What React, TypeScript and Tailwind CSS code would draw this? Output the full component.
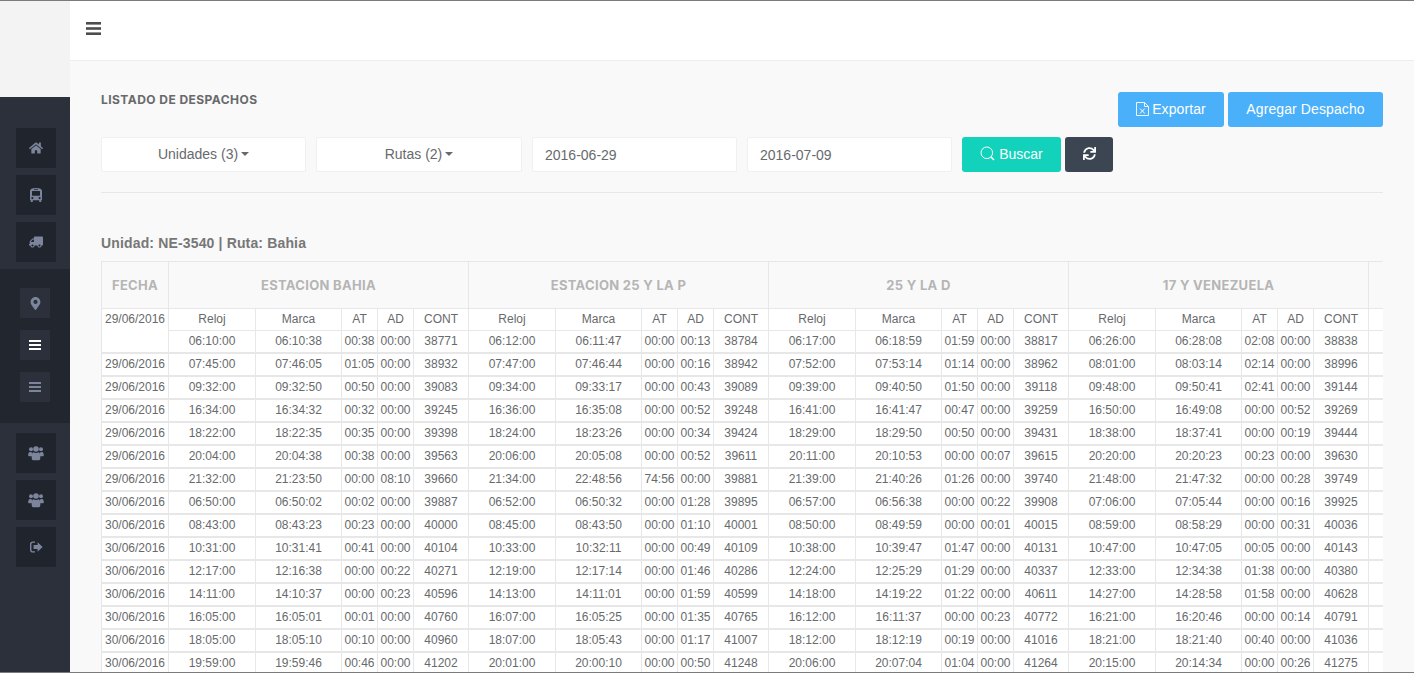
import { FaHome, FaTruck, FaMapMarkerAlt, FaSync } from "react-icons/fa";
import type { ReactNode } from "react";

type Cell = [string, string, string, string, string];
type Row = { fecha: string; cells: Cell[] };

const stations = ["ESTACION BAHIA", "ESTACION 25 Y LA P", "25 Y LA D", "17 Y VENEZUELA"];

function parseRow(line: string): Row {
  const parts = line.split(" ");
  const fecha = parts[0] === "-" ? "" : parts[0];
  const rest = parts.slice(1);
  const cells: Cell[] = [];
  for (let i = 0; i < rest.length; i += 5) {
    cells.push([rest[i], rest[i + 1], rest[i + 2], rest[i + 3], rest[i + 4]]);
  }
  return { fecha, cells };
}

const rows = [
  "- 06:10:00 06:10:38 00:38 00:00 38771 06:12:00 06:11:47 00:00 00:13 38784 06:17:00 06:18:59 01:59 00:00 38817 06:26:00 06:28:08 02:08 00:00 38838",
  "29/06/2016 07:45:00 07:46:05 01:05 00:00 38932 07:47:00 07:46:44 00:00 00:16 38942 07:52:00 07:53:14 01:14 00:00 38962 08:01:00 08:03:14 02:14 00:00 38996",
  "29/06/2016 09:32:00 09:32:50 00:50 00:00 39083 09:34:00 09:33:17 00:00 00:43 39089 09:39:00 09:40:50 01:50 00:00 39118 09:48:00 09:50:41 02:41 00:00 39144",
  "29/06/2016 16:34:00 16:34:32 00:32 00:00 39245 16:36:00 16:35:08 00:00 00:52 39248 16:41:00 16:41:47 00:47 00:00 39259 16:50:00 16:49:08 00:00 00:52 39269",
  "29/06/2016 18:22:00 18:22:35 00:35 00:00 39398 18:24:00 18:23:26 00:00 00:34 39424 18:29:00 18:29:50 00:50 00:00 39431 18:38:00 18:37:41 00:00 00:19 39444",
  "29/06/2016 20:04:00 20:04:38 00:38 00:00 39563 20:06:00 20:05:08 00:00 00:52 39611 20:11:00 20:10:53 00:00 00:07 39615 20:20:00 20:20:23 00:23 00:00 39630",
  "29/06/2016 21:32:00 21:23:50 00:00 08:10 39660 21:34:00 22:48:56 74:56 00:00 39881 21:39:00 21:40:26 01:26 00:00 39740 21:48:00 21:47:32 00:00 00:28 39749",
  "30/06/2016 06:50:00 06:50:02 00:02 00:00 39887 06:52:00 06:50:32 00:00 01:28 39895 06:57:00 06:56:38 00:00 00:22 39908 07:06:00 07:05:44 00:00 00:16 39925",
  "30/06/2016 08:43:00 08:43:23 00:23 00:00 40000 08:45:00 08:43:50 00:00 01:10 40001 08:50:00 08:49:59 00:00 00:01 40015 08:59:00 08:58:29 00:00 00:31 40036",
  "30/06/2016 10:31:00 10:31:41 00:41 00:00 40104 10:33:00 10:32:11 00:00 00:49 40109 10:38:00 10:39:47 01:47 00:00 40131 10:47:00 10:47:05 00:05 00:00 40143",
  "30/06/2016 12:17:00 12:16:38 00:00 00:22 40271 12:19:00 12:17:14 00:00 01:46 40286 12:24:00 12:25:29 01:29 00:00 40337 12:33:00 12:34:38 01:38 00:00 40380",
  "30/06/2016 14:11:00 14:10:37 00:00 00:23 40596 14:13:00 14:11:01 00:00 01:59 40599 14:18:00 14:19:22 01:22 00:00 40611 14:27:00 14:28:58 01:58 00:00 40628",
  "30/06/2016 16:05:00 16:05:01 00:01 00:00 40760 16:07:00 16:05:25 00:00 01:35 40765 16:12:00 16:11:37 00:00 00:23 40772 16:21:00 16:20:46 00:00 00:14 40791",
  "30/06/2016 18:05:00 18:05:10 00:10 00:00 40960 18:07:00 18:05:43 00:00 01:17 41007 18:12:00 18:12:19 00:19 00:00 41016 18:21:00 18:21:40 00:40 00:00 41036",
  "30/06/2016 19:59:00 19:59:46 00:46 00:00 41202 20:01:00 20:00:10 00:00 00:50 41248 20:06:00 20:07:04 01:04 00:00 41264 20:15:00 20:14:34 00:00 00:26 41275",
].map(parseRow);

function BarsIcon({ w, h }: { w: number; h: number }) {
  return (
    <svg width={w} height={h} viewBox="0 0 12 10" preserveAspectRatio="none" fill="currentColor">
      <rect x="0" y="0" width="12" height="2" />
      <rect x="0" y="4" width="12" height="2" />
      <rect x="0" y="8" width="12" height="2" />
    </svg>
  );
}

function BusIcon() {
  return (
    <svg width="12" height="14" viewBox="0 0 12 14" fill="currentColor">
      <path
        fillRule="evenodd"
        d="M0 3C0 1 2 0 6 0S12 1 12 3V11.5C12 12 11.8 12.2 11.3 12.2V13.4C11.3 13.8 11 14 10.6 14H9.8C9.4 14 9.2 13.8 9.2 13.4V12.2H2.8V13.4C2.8 13.8 2.6 14 2.2 14H1.4C1 14 .7 13.8.7 13.4V12.2C.2 12.2 0 12 0 11.5ZM2 3.5V7.2C2 7.6 2.2 7.8 2.6 7.8H9.4C9.8 7.8 10 7.6 10 7.2V3.5C10 3.1 9.8 2.9 9.4 2.9H2.6C2.2 2.9 2 3.1 2 3.5ZM4 1.3V2H8V1.3ZM2.4 9A1.1 1.1 0 1 0 2.4 11.2 1.1 1.1 0 1 0 2.4 9ZM9.6 9A1.1 1.1 0 1 0 9.6 11.2 1.1 1.1 0 1 0 9.6 9Z"
      />
    </svg>
  );
}

function UsersIcon() {
  return (
    <svg width="16" height="15" viewBox="0 0 16 15" fill="currentColor">
      <circle cx="3" cy="3.2" r="2" />
      <circle cx="13" cy="3.2" r="2" />
      <circle cx="8" cy="3" r="2.8" />
      <path d="M0.2 9.5C0.2 7 1 5.8 2.2 6 3 6.4 3.6 6.5 4.1 6.4 3.9 7.6 4 9 4.6 10.2H1C0.5 10.2 0.2 10 0.2 9.5Z" />
      <path d="M15.8 9.5C15.8 7 15 5.8 13.8 6 13 6.4 12.4 6.5 11.9 6.4 12.1 7.6 12 9 11.4 10.2H15C15.5 10.2 15.8 10 15.8 9.5Z" />
      <path d="M5.2 6.2C6.8 7.2 9.2 7.2 10.8 6.2 11.9 6.4 12.3 8.5 12.3 12 12.3 13.6 11.8 14.2 10.8 14.2H5.2C4.2 14.2 3.7 13.6 3.7 12 3.7 8.5 4.1 6.4 5.2 6.2Z" />
    </svg>
  );
}

function SignOutIcon() {
  return (
    <svg width="13" height="12" viewBox="0 0 13 12" fill="currentColor">
      <path d="M5 0.5V1.7H3A1.5 1.5 0 0 0 1.4 3.2V8.8A1.5 1.5 0 0 0 3 10.3H5V11.5H2.8A2.8 2.8 0 0 1 0 8.7V3.3A2.8 2.8 0 0 1 2.8 0.5Z" />
      <path d="M7.6 1.2 12.6 6 7.6 10.8V8H3.6V4H7.6Z" />
    </svg>
  );
}

function ExcelIcon() {
  return (
    <svg width="13" height="14" viewBox="0 0 13 14" fill="none" stroke="currentColor" strokeWidth="0.9">
      <path d="M0.5 0.5H8.5L12.5 4.5V13.5H0.5Z" />
      <path d="M8.5 0.5V4.5H12.5" />
      <path d="M4 6.5 8.8 11.5M8.8 6.5 4 11.5" strokeWidth="1" />
    </svg>
  );
}

function SideButton({ children }: { children: ReactNode }) {
  return (
    <div className="w-10 h-10 bg-[#20242d] flex items-center justify-center text-[#7c859b] text-sm">
      {children}
    </div>
  );
}

function SubButton({ children, active }: { children: ReactNode; active?: boolean }) {
  return (
    <div
      className={`w-[30px] h-[30px] bg-[#2b303b] flex items-center justify-center text-[13px] ${
        active ? "text-white" : "text-[#7c859b]"
      }`}
    >
      {children}
    </div>
  );
}

function Sidebar() {
  return (
    <aside className="w-[70px] shrink-0 flex flex-col">
      <div className="h-[96px] bg-[#f3f3f3]" />
      <div className="h-[172px] bg-[#2b303b] flex flex-col pl-4 pt-[31px] gap-[7px]">
        <SideButton><FaHome /></SideButton>
        <SideButton><BusIcon /></SideButton>
        <SideButton><FaTruck className="-scale-x-100" /></SideButton>
      </div>
      <div className="h-[154px] bg-[#22262f] flex flex-col items-center pt-[19px] gap-3">
        <SubButton><FaMapMarkerAlt /></SubButton>
        <SubButton active><BarsIcon w={12} h={10} /></SubButton>
        <SubButton><BarsIcon w={12} h={10} /></SubButton>
      </div>
      <div className="flex-1 bg-[#2b303b] flex flex-col pl-4 pt-[10px] gap-[7px]">
        <SideButton><UsersIcon /></SideButton>
        <SideButton><UsersIcon /></SideButton>
        <SideButton><SignOutIcon /></SideButton>
      </div>
    </aside>
  );
}

function Caret() {
  return <span className="inline-block ml-[3px] w-0 h-0 border-x-4 border-x-transparent border-t-4 border-t-[#676a6c]" />;
}

function DataTable() {
  const headCell = "border border-[#e7e7e7] bg-[#f9f9f9] text-[#b5b5b5] font-bold text-[13px] tracking-[0.3px] text-center h-[47px] p-0 pt-[2px]";
  const cell = "border border-[#e7e7e7] bg-white text-center p-0 h-[23px] whitespace-nowrap";
  const firstCell = "border border-[#e7e7e7] bg-white text-center p-0 h-[22px] whitespace-nowrap";
  const labelCell = "border border-[#e7e7e7] bg-white text-center p-0 pb-[2px] h-[22px] whitespace-nowrap";
  return (
    <div className="overflow-hidden">
      <table className="table-fixed border-collapse w-[1567px] text-xs text-[#676a6c]">
        <colgroup>
          <col className="w-[67px]" />
          {[0, 1, 2, 3, 4].map((g) => [
            <col key={`r${g}`} className="w-[87px]" />,
            <col key={`m${g}`} className="w-[86px]" />,
            <col key={`at${g}`} className="w-[36px]" />,
            <col key={`ad${g}`} className="w-[36px]" />,
            <col key={`c${g}`} className="w-[55px]" />,
          ])}
        </colgroup>
        <thead>
          <tr className="font-['Inter',sans-serif]">
            <th className={headCell}>FECHA</th>
            {stations.map((s) => (
              <th key={s} colSpan={5} className={headCell}>{s}</th>
            ))}
            <th colSpan={5} className={headCell} />
          </tr>
        </thead>
        <tbody>
          <tr>
            <td className={`${labelCell} border-b-0`}>29/06/2016</td>
            {stations.map((s) =>
              ["Reloj", "Marca", "AT", "AD", "CONT"].map((h) => (
                <td key={s + h} className={labelCell}>{h}</td>
              ))
            )}
            <td colSpan={5} className={labelCell} />
          </tr>
          {rows.map((row, i) => (
            <tr key={i} className="border-b-2 border-[#e7e7e7]">
              <td className={`${i === 0 ? firstCell : cell} ${i === 0 ? "border-t-0" : ""}`}>{row.fecha}</td>
              {row.cells.map((c, j) =>
                c.map((v, k) => (
                  <td key={`${j}-${k}`} className={i === 0 ? firstCell : cell}>{v}</td>
                ))
              )}
              <td colSpan={5} className={i === 0 ? firstCell : cell} />
            </tr>
          ))}
        </tbody>
      </table>
    </div>
  );
}

export default function App() {
  const filter = "h-[35px] bg-white border border-[#f0f0f0] rounded-[2px] text-sm text-[#676a6c] flex items-center";
  return (
    <div className="w-[1414px] h-[673px] overflow-hidden flex flex-col bg-[#f9f9f9] font-['Liberation_Sans',Arial,sans-serif]">
      <div className="h-px shrink-0 bg-[#7b7b7b]" />
      <div className="flex-1 flex min-h-0">
        <Sidebar />
        <main className="flex-1 min-w-0 flex flex-col">
          <header className="h-[60px] shrink-0 bg-white border-b border-[#eeeeee] flex items-center pl-4 pb-[5px] text-[#4d4d4d]">
            <BarsIcon w={15} h={13} />
          </header>
          <section className="flex-1 min-h-0 px-[31px] pt-[31px] text-[#676a6c]">
            <div className="flex justify-between h-[35px]">
              <h1 className="font-['Inter',sans-serif] text-xs font-bold tracking-[0.45px] text-[#676a6c] leading-[16px]">LISTADO DE DESPACHOS</h1>
              <div className="flex gap-1">
                <button className="w-[106px] h-[35px] pb-[2px] rounded-[3px] bg-[#49b0f9] text-white text-sm tracking-[0.1px] flex items-center justify-center gap-[3px]">
                  <ExcelIcon />Exportar
                </button>
                <button className="w-[155px] h-[35px] pb-[2px] rounded-[3px] bg-[#49b0f9] text-white text-sm tracking-[0.1px]">Agregar Despacho</button>
              </div>
            </div>
            <div className="flex mt-[10px]">
              <div className={`${filter} w-[205px] pb-[2px] justify-center`}>Unidades (3)<Caret /></div>
              <div className={`${filter} w-[206px] pb-[2px] ml-[10px] justify-center`}>Rutas (2)<Caret /></div>
              <div className={`${filter} w-[205px] ml-[10px] pl-3 text-[#333]`}>2016-06-29</div>
              <div className={`${filter} w-[205px] ml-[10px] pl-3 text-[#333]`}>2016-07-09</div>
              <button className="w-[99px] h-[35px] pb-[2px] ml-[10px] rounded-[3px] bg-[#12d2bc] text-white text-sm flex items-center justify-center gap-1">
                <svg width="15" height="15" viewBox="0 0 15 15" fill="none" stroke="currentColor">
                  <circle cx="6.8" cy="6.8" r="5.8" />
                  <path d="M11 11l3 3" strokeWidth="1.6" />
                </svg>
                Buscar
              </button>
              <button className="w-[48px] h-[35px] pb-[2px] ml-1 rounded-[3px] bg-[#3b4652] text-white text-[13px] flex items-center justify-center">
                <FaSync />
              </button>
            </div>
            <hr className="mt-5 border-t border-[#e7e7e7]" />
            <h2 className="mt-[42px] mb-[10px] text-sm font-bold text-[#777] tracking-[0.15px] leading-4">Unidad: NE-3540 | Ruta: Bahia</h2>
            <DataTable />
          </section>
        </main>
      </div>
      <div className="h-px shrink-0 bg-[#7b7b7b]" />
    </div>
  );
}
